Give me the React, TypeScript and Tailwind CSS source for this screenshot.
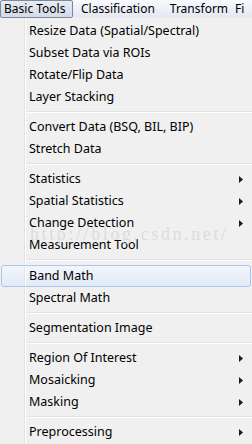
import React from "react";

type Item = { label: string; sub?: boolean; hl?: boolean } | "sep";

const items: Item[] = [
  { label: "Resize Data (Spatial/Spectral)" },
  { label: "Subset Data via ROIs" },
  { label: "Rotate/Flip Data" },
  { label: "Layer Stacking" },
  "sep",
  { label: "Convert Data (BSQ, BIL, BIP)" },
  { label: "Stretch Data" },
  "sep",
  { label: "Statistics", sub: true },
  { label: "Spatial Statistics", sub: true },
  { label: "Change Detection", sub: true },
  { label: "Measurement Tool" },
  "sep",
  { label: "Band Math", hl: true },
  { label: "Spectral Math" },
  "sep",
  { label: "Segmentation Image" },
  "sep",
  { label: "Region Of Interest", sub: true },
  { label: "Mosaicking", sub: true },
  { label: "Masking", sub: true },
  "sep",
  { label: "Preprocessing", sub: true },
];

function Arrow() {
  return (
    <svg width="4" height="7" viewBox="0 0 4 7" className="shrink-0">
      <polygon points="0,0 4,3.5 0,7" fill="#1a1a1a" />
    </svg>
  );
}

function Gutter() {
  return <div className="w-[2px] self-stretch shrink-0 border-l border-l-[#e2e3e3] border-r border-r-white" />;
}

export default function App() {
  return (
    <div
      className="relative flex flex-col w-[252px] h-[444px] overflow-hidden bg-[#f0f0f0] text-black text-[12px]"
      style={{ fontFamily: '"Noto Sans", sans-serif' }}
    >
      {/* menu bar */}
      <div className="flex h-[18px] shrink-0 items-center bg-gradient-to-b from-[#f9fafd] to-[#e4e8f2] border-b border-[#e8ebf2]">
        <div className="flex h-[18px] items-center pl-[3px] w-[73px] border border-[#7c8a9c] rounded-[2px] bg-gradient-to-b from-[#e6ebf3] to-[#d3dbe8]">
          Basic Tools
        </div>
        <div className="ml-[8px]">Classification</div>
        <div className="ml-[15px]">Transform</div>
        <div className="ml-[7px]">Fi</div>
      </div>
      {/* dropdown */}
      <div className="relative flex flex-col text-[12.5px]">
        <div className="flex h-[2px]">
          <div className="w-[24px]" />
          <Gutter />
        </div>
        {items.map((it, i) =>
          it === "sep" ? (
            <div key={i} className="flex h-[8px]">
              <div className="w-[24px]" />
              <Gutter />
              <div className="flex-1 flex flex-col justify-center">
                <div className="h-[2px] border-t border-t-[#e2e3e3] border-b border-b-white" />
              </div>
            </div>
          ) : (
            <div
              key={i}
              className={
                "flex h-[22px] items-center " +
                (it.hl
                  ? "mx-[1px] mt-[1px] h-[21px] rounded-[3px] border border-[#a9c8f0] bg-gradient-to-b from-[#f2f5fb] to-[#e3ebf7]"
                  : "")
              }
            >
              <div className={it.hl ? "w-[22px]" : "w-[24px]"} />
              <Gutter />
              <div className="flex-1 pl-[3px] whitespace-nowrap">{it.label}</div>
              {it.sub && <Arrow />}
              <div className={it.hl ? "w-[7px]" : "w-[9px]"} />
            </div>
          )
        )}
        <div
          className="absolute left-[30px] top-[203px] text-[18px] tracking-[2.6px] text-[#d8d8d8] opacity-80 pointer-events-none whitespace-nowrap"
          style={{ fontFamily: '"Liberation Serif", serif' }}
        >
          http://blog.csdn.net/
        </div>
      </div>
    </div>
  );
}
